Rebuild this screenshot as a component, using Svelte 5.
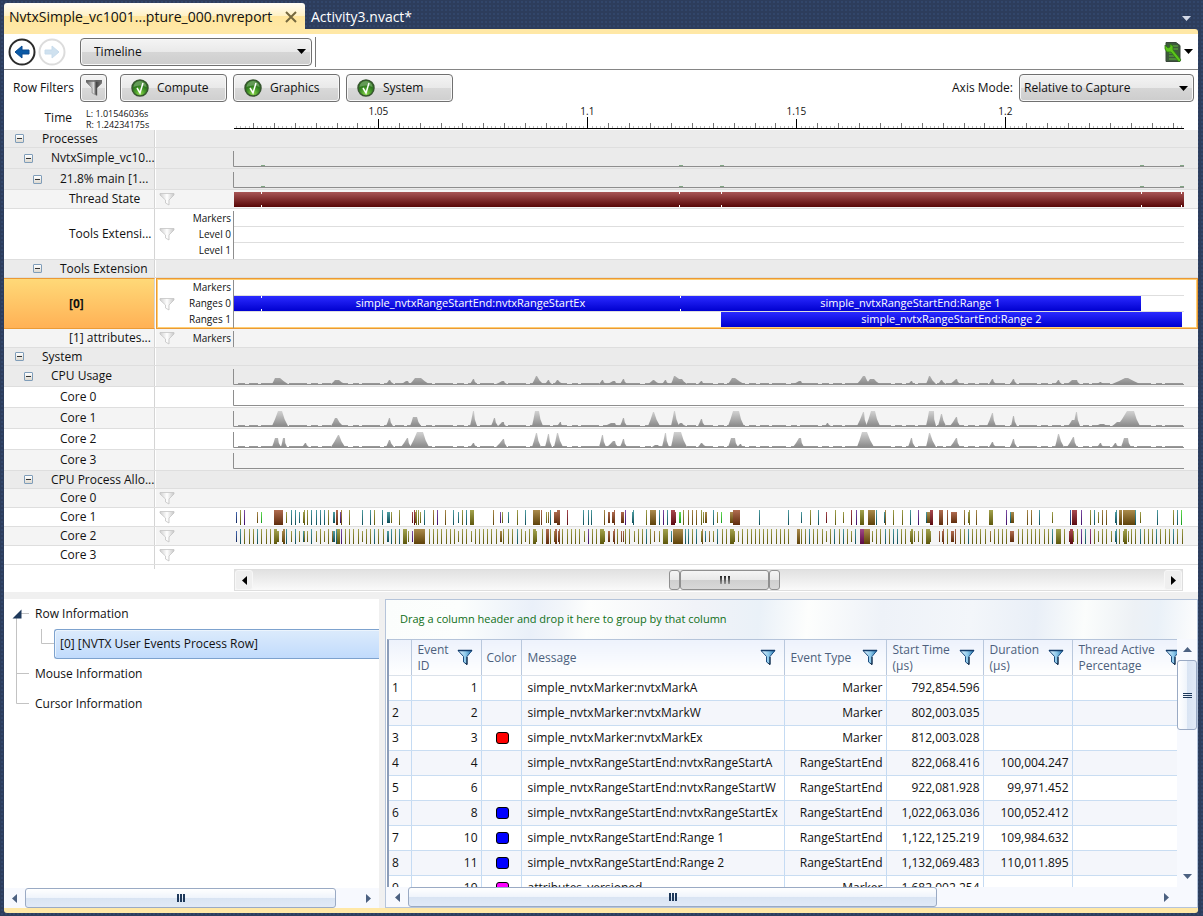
<script>
    let view = $state("Timeline");
    let axisMode = $state("Relative to Capture");
    let filters = $state([
        { name: "Compute", on: true },
        { name: "Graphics", on: true },
        { name: "System", on: true },
    ]);

    // All plots share this width, svgs stretch to the lane
    const W = 951;
    const START = 1.01546;
    const PX_PER_MS = 4.18;

    const ticks = Array.from({ length: 227 }, (_, i) => {
        const ms = 1016 + i;
        return {
            x: Math.round((ms - START * 1000) * PX_PER_MS) + 1,
            h: ms % 100 === 0 ? 12 : ms % 50 === 0 ? 10 : ms % 5 === 0 ? 6 : 3,
            color: ms % 50 === 0 ? "#000" : ms % 5 === 0 ? "#777" : "#bbb",
        };
    });
    const axisLabels = [1.05, 1.1, 1.15, 1.2].map((t) => ({
        t,
        left: (((t - START) * 1000 * PX_PER_MS + 1) / W) * 100,
    }));

    // left, top-left, top-right, right, height
    const usage = [
        [39,42,46,54,6],[98,102,105,111,4],[153,156,156,160,4],[168,173,174,177,3],[177,182,187,195,6],
        [237,240,240,243,5],[263,269,270,273,3],[299,303,303,309,8],[312,315,315,318,4],[321,324,324,329,4],
        [366,369,369,372,4],[374,380,381,384,3],[387,390,390,393,5],[415,420,420,426,4],[429,432,432,435,4],
        [438,441,441,453,8],[444,446,448,453,5],[465,468,468,471,3],[495,499,501,510,6],[560,566,567,570,3],
        [624,630,631,636,8],[633,637,640,646,5],[675,678,678,681,3],[693,696,696,702,8],[705,708,708,712,4],
        [717,723,723,726,5],[756,759,759,762,5],[777,780,780,783,5],[822,825,825,828,4],[834,839,843,846,4],
        [864,867,867,870,2],[879,892,894,906,6],
    ];
    const core1 = [
        [39,45,48,54,15],[98,102,103,109,8],[153,156,156,159,8],[177,180,183,187,9],[237,240,240,243,15],
        [258,261,261,264,8],[265,269,270,272,4],[299,302,305,309,15],[324,327,327,329,4],[371,378,381,384,3],
        [387,390,390,393,8],[415,420,420,426,14],[438,441,441,445,15],[444,447,448,452,3],[465,468,468,471,7],
        [495,500,505,510,15],[592,594,594,597,3],[624,630,630,633,14],[633,638,641,646,15],[693,696,700,702,15],
        [705,708,708,712,12],[717,723,723,726,9],[754,759,759,762,13],[778,780,780,783,10],[835,839,841,845,6],
        [840,843,843,846,14],[863,867,870,874,2],[879,884,890,895,4],[884,894,900,906,15],
    ];
    const core2 = [
        [39,42,44,47,9],[48,50,51,53,9],[69,72,72,75,4],[98,105,105,111,12],[153,156,156,160,7],
        [168,174,174,177,9],[177,184,189,195,15],[237,240,240,243,4],[263,270,270,273,8],[299,303,303,307,14],
        [312,315,315,318,13],[321,324,324,329,14],[366,369,369,372,12],[374,380,381,384,6],[387,390,390,393,8],
        [419,422,424,427,2],[429,432,432,435,14],[438,441,447,453,15],[465,468,468,473,4],[495,498,501,504,9],
        [504,507,507,510,3],[560,566,567,570,9],[624,629,633,640,15],[675,678,678,681,9],[693,696,696,702,14],
        [717,723,723,726,9],[756,759,759,762,5],[777,780,780,783,8],[822,825,825,830,13],[834,840,840,843,10],
        [864,867,867,870,4],[879,882,882,885,4],[888,891,894,897,9],
    ];

    // x[+width]colour, upper case is a short bar
    const alloc1 = `3N 7o 11p 24D 28G 41+9w 53O 58b 62b 66B 70O 71o 74o 78b 83b 87b 91b 95o 100+2B 103+2w 107P 108d 116o 129b 137b 141o 149b
        154+3B 158O 166o 179R 181r 182D 183o 185o 187O 191b 200d 204p 212d 220b 225B 229o 233b 237+4o 260d 267P 269O 275B 284o 292b
        300+7d 308w 313O 315D 317b 321+3W 324+3w 334r 350b 355b 358b 371d 375+2W 379+2W 381w 388+3W 392p 399B 400b 413o 417+6d 426b
        430p 434b 438+4r 442R 446+2G 450o 455d 459d 463d 468o 470O 472+2D 480b 484O 488G 497+3D 500+6w 506w 526b 555b 568B
        577o 585b 593R 602o 610O 618r 623p 627+4o 635+7d 643b 651B 652d 660o 669o 677b 685p 693B 694+3D 697+3r 706+4w 714w 718+6W
        731d 735O 736o 743d 756+4o 773p 777B 778+3D 794d 798d 806b 819O 837n 839+5r 848p 857o 861b 865O 869d 873d 882B 883b
        886+3d 890+12d 902b 907O 924b 940o 944b 948g`;
    const alloc2 = `3N 7b 11o 16o 20o 24b 28o 33o 37o 41+3o 44+2O 49D 50+2d 53b 58O 62b 66O 70B 71O 74O 78b 83O 87o 91O 95o 99D 100+2B 103b
        104+3o 108p 112o 116o 120o 125o 129O 133o 137o 141b 145o 150o 154+2B 158b 162o 166b 170+4o 175O 179P 181+11d 196o 200o 204o
        208o 213o 217o 221o 225O 229o 233o 238O 242o 246o 250o 254o 258o 263o 267+2D 270o 275o 279o 284b 288o 292O 296o 300+3o 303O
        309o 313+3w 317o 321D 322+2w 325W 326w 329o 334o 338o 342o 346o 351O 355p 359o 363o 367+4o 371O 375+2W 380W 381w 384o 388W 390W
        392o 396o 401O 405o 409o 413b 417o 421D 426O 430+4o 434o 438B 440+10d 452b 455b 459o 463b 468O 469d 472B 476D 480O 484b 489o
        493o 497+4o 501O 505O 509o 514o 518o 522o 526o 530o 534o 538o 543o 547o 551o 555o 564+3d 568o 572o 576b 580o 584o 589o 593O
        597o 601b 606o 610b 614o 618O 622b 627+4m 631+6d 639O 643o 647o 652b 656o 660b 664b 668o 672o 677O 678+2o 681O 685O 689o
        693+4o 697O 706W 709W 710w 714o 718+3W 722w 727o 731o 735b 739o 743o 747o 752o 757D 761o 765o 769o 773o 777+4W 785o 789o
        794o 798o 802o 806o 811o 815o 819b 823+5o 831o 836R 837+3r 840O 844o 848p 852b 857m 861o 865O 869o 873o 878O 882B 883b 886o
        890O 891+3o 895O 898o 902o 907b 911o 915o 919o 923b 927o 932o 936o 940b 944o 949o`;
    const barColors = {
        o: ["#a3a34e", "#5d570c"],
        d: ["#ab8b4c", "#5e4209"],
        w: ["#b06c50", "#5f2c0c"],
        r: ["#a94a50", "#5b0a10"],
        b: ["#4f9fa4", "#0e4d58"],
        p: ["#8050a8", "#3b0a66"],
        n: ["#4468b0", "#13285f"],
        g: ["#66dd55", "#159a1a"],
        m: ["#a04886", "#5c0b45"],
    };
    function parseBars(text) {
        return text.split(/\s+/).map((token) => {
            const [, x, w, c] = token.match(/^(\d+)(?:\+(\d+))?(\w)$/);
            return { x: +x, w: +(w ?? 1), c: c.toLowerCase(), short: c < "a" };
        });
    }

    const ranges0 = [
        { from: 1, to: 28, text: "" },
        { from: 28, to: 447, text: "simple_nvtxRangeStartEnd:nvtxRangeStartEx" },
        { from: 447, to: 908, text: "simple_nvtxRangeStartEnd:Range 1" },
    ];
    const ranges1 = [{ from: 488, to: 949, text: "simple_nvtxRangeStartEnd:Range 2" }];

    const rows = [
        { name: "Processes", depth: 0, open: true, size: "small", tone: "dark" },
        { name: "NvtxSimple_vc10...", depth: 1, open: true, size: "large", tone: "dark", peaks: [], blips: true },
        { name: "21.8% main [1...", depth: 2, open: true, size: "large", tone: "dark", peaks: [], blips: true },
        { name: "Thread State", depth: 3, size: "medium", tone: "light", filter: true, thread: true },
        { name: "Tools Extensi...", depth: 3, size: "triple", filter: true, lanes: [["Markers", []], ["Level 0", []], ["Level 1", []]] },
        { name: "Tools Extension", depth: 2, open: true, size: "small", tone: "dark" },
        { name: "[0]", depth: 3, size: "triple", filter: true, selected: true, lanes: [["Markers", []], ["Ranges 0", ranges0], ["Ranges 1", ranges1]] },
        { name: "[1] attributes...", depth: 3, size: "medium", tone: "light", filter: true, lanes: [["Markers", []]] },
        { name: "System", depth: 0, open: true, size: "small", tone: "dark" },
        { name: "CPU Usage", depth: 1, open: true, size: "large", tone: "dark", peaks: usage },
        { name: "Core 0", depth: 2, size: "large", peaks: [] },
        { name: "Core 1", depth: 2, size: "large", tone: "light", peaks: core1 },
        { name: "Core 2", depth: 2, size: "large", peaks: core2 },
        { name: "Core 3", depth: 2, size: "large", tone: "light", peaks: [] },
        { name: "CPU Process Allo...", depth: 1, open: true, size: "small", tone: "dark" },
        { name: "Core 0", depth: 2, size: "medium", tone: "light", filter: true },
        { name: "Core 1", depth: 2, size: "medium", filter: true, bars: parseBars(alloc1) },
        { name: "Core 2", depth: 2, size: "medium", tone: "light", filter: true, bars: parseBars(alloc2) },
        { name: "Core 3", depth: 2, size: "medium", filter: true },
    ];

    const columns = [
        { name: "Event ID", cls: "id", filter: true },
        { name: "Color", cls: "color" },
        { name: "Message", cls: "message", filter: true },
        { name: "Event Type", cls: "type", filter: true },
        { name: "Start Time (µs)", cls: "start", filter: true },
        { name: "Duration (µs)", cls: "duration", filter: true },
        { name: "Thread Active Percentage", cls: "thread", filter: true },
    ];
    const events = [
        [1, "", "simple_nvtxMarker:nvtxMarkA", "Marker", "792,854.596", ""],
        [2, "", "simple_nvtxMarker:nvtxMarkW", "Marker", "802,003.035", ""],
        [3, "#ff0000", "simple_nvtxMarker:nvtxMarkEx", "Marker", "812,003.028", ""],
        [4, "", "simple_nvtxRangeStartEnd:nvtxRangeStartA", "RangeStartEnd", "822,068.416", "100,004.247"],
        [6, "", "simple_nvtxRangeStartEnd:nvtxRangeStartW", "RangeStartEnd", "922,081.928", "99,971.452"],
        [8, "#0000ff", "simple_nvtxRangeStartEnd:nvtxRangeStartEx", "RangeStartEnd", "1,022,063.036", "100,052.412"],
        [10, "#0000ff", "simple_nvtxRangeStartEnd:Range 1", "RangeStartEnd", "1,122,125.219", "109,984.632"],
        [11, "#0000ff", "simple_nvtxRangeStartEnd:Range 2", "RangeStartEnd", "1,132,069.483", "110,011.895"],
        [19, "#ff00ff", "attributes_versioned", "Marker", "1,682,002.254", ""],
    ];
</script>

{#snippet funnel(kind)}
    <svg class="funnel" width="16" height="16" viewBox="0 0 16 16" aria-hidden="true">
        {#if kind === "blue"}
            <path d="M1 1.500h14L10 7.500V15.500L6.500 13V7.500z" fill="url(#funnelBlue)" stroke="#1d4f82" />
            <path d="M1 1.500h14" stroke="#123a68" stroke-width="1.500" />
            <path d="M10 8v7.500l-1.500-1" stroke="#14283e" fill="none" />
        {:else if kind === "dark"}
            <path d="M0 0h17v2L11 8v7.500L6 13V8L0 2z" fill="url(#funnelDark)" stroke="#777" stroke-width=".5" />
            <path d="M0 1h16" stroke="#6a6a6a" stroke-width="1.500" />
        {:else}
            <path d="M1 2.500h14v1.500L10 9v5L6.500 12V9L1 4z" fill="url(#funnelLight)" stroke="#c4c4c4" stroke-width=".8" />
        {/if}
    </svg>
{/snippet}

{#snippet caret(dir)}
    <svg class="caret" width="9" height="9" viewBox="0 0 9 9" fill="currentColor" aria-hidden="true">
        {#if dir === "down"}<path d="M0 2h9L4.500 7z" />
        {:else if dir === "up"}<path d="M0 7h9L4.500 2z" />
        {:else if dir === "left"}<path d="M7 0v9L2 4.500z" />
        {:else}<path d="M2 0v9l5-4.500z" />{/if}
    </svg>
{/snippet}

<!-- shared gradients -->
<svg class="defs" width="0" height="0" aria-hidden="true">
    <defs>
        <linearGradient id="funnelBlue"><stop stop-color="#e8f6ff" /><stop offset=".55" stop-color="#8cc8ea" /><stop offset="1" stop-color="#2474ae" /></linearGradient>
        <linearGradient id="funnelDark"><stop stop-color="#555" /><stop offset=".45" stop-color="#dcdcdc" /><stop offset=".6" stop-color="#444" /><stop offset="1" stop-color="#888" /></linearGradient>
        <linearGradient id="funnelLight"><stop stop-color="#cfcfcf" /><stop offset=".5" stop-color="#fff" /><stop offset="1" stop-color="#c6c6c6" /></linearGradient>
        <linearGradient id="peak" x1="0" x2="0" y1="0" y2="16" gradientUnits="userSpaceOnUse"><stop stop-color="#d2d2d2" /><stop offset="1" stop-color="#868686" /></linearGradient>
        <radialGradient id="check" cx=".5" cy=".85"><stop stop-color="#8fd84e" /><stop offset=".6" stop-color="#4a9e2b" /><stop offset="1" stop-color="#2f7a1e" /></radialGradient>
        {#each Object.entries(barColors) as [key, [top, bottom]]}
            <linearGradient id="bar-{key}" x1="0" x2="0" y1="0" y2="1"><stop stop-color={top} /><stop offset="1" stop-color={bottom} /></linearGradient>
        {/each}
    </defs>
</svg>

<div class="window">
    <nav class="tabs">
        <div class="tab active">
            <a href="#report">NvtxSimple_vc1001...pture_000.nvreport</a>
            <button class="close" aria-label="Close tab">
                <svg width="12" height="12" viewBox="0 0 12 12"><path d="M1 1l10 10M11 1L1 11" stroke="#75683f" stroke-width="2" /></svg>
            </button>
        </div>
        <div class="tab"><a href="#activity">Activity3.nvact*</a></div>
        <button class="tab-list" aria-label="Open documents">{@render caret("down")}</button>
    </nav>

    <main>
        <div class="toolbar">
            <button class="nav-button" aria-label="Back">
                <svg width="28" height="28" viewBox="0 0 28 28"><circle cx="14" cy="14" r="12.500" fill="#fff" stroke="#2b2b2b" stroke-width="2" /><path d="M7 14l7-6v4h7v4h-7v4z" fill="#0a59a5" stroke="#0a4a90" stroke-linejoin="round" /></svg>
            </button>
            <button class="nav-button" aria-label="Forward" disabled>
                <svg width="28" height="28" viewBox="0 0 28 28"><circle cx="14" cy="14" r="12.500" fill="#fff" stroke="#dcdcdc" stroke-width="2" /><path d="M21 14l-7-6v4H7v4h7v4z" fill="#cfe1ef" stroke="#c8dcec" stroke-linejoin="round" /></svg>
            </button>
            <div class="select view-select">
                <select bind:value={view} aria-label="View"><option>Timeline</option><option>Summary</option></select>
                {@render caret("down")}
            </div>
            <span class="divider"></span>
            <button class="tools" aria-label="Report options">
                <svg width="18" height="22" viewBox="0 0 18 22">
                    <path d="M2 1.500h10l4 3V20.500H2z" fill="#3d5a3b" stroke="#39473a" />
                    <path d="M9 5h5M9 8h5M5 12h3M5 15h6M5 18h8" stroke="#63b63c" />
                    <path d="M1 4l3 3 2-1 0-3 3 2 0 4 8 10-2 2-8-10-4 0-2-3z" fill="#5cc41a" stroke="#2d7a14" stroke-width=".8" />
                </svg>
                {@render caret("down")}
            </button>
        </div>

        <div class="filters">
            <span>Row Filters</span>
            <button class="push funnel-button" aria-label="Edit row filters">{@render funnel("dark")}</button>
            {#each filters as f}
                <button class="push toggle" aria-pressed={f.on} onclick={() => (f.on = !f.on)}>
                    <svg width="18" height="18" viewBox="0 0 18 18">
                        <circle cx="9" cy="9" r="8" fill={f.on ? "url(#check)" : "#ccc"} stroke="#37552f" stroke-width="1.500" />
                        <path d="M2.500 8a6.500 6 0 0 1 13 0q-6.500-3-13 0z" fill="#fff" opacity=".25" />
                        <path d="M6 9l3 5 3-10" fill="none" stroke="#fff" stroke-width="1.500" />
                    </svg>
                    <span>{f.name}</span>
                </button>
            {/each}
            <label for="axis">Axis Mode:</label>
            <div class="select axis-select">
                <select id="axis" bind:value={axisMode}><option>Relative to Capture</option><option>Absolute</option></select>
                {@render caret("down")}
            </div>
        </div>

        <section class="timeline">
            <div class="time-row">
                <span class="time">Time</span>
                <span class="bounds">L: 1.01546036s<br />R: 1.24234175s</span>
                <div class="axis">
                    {#each axisLabels as a}
                        <span class="axis-label" style="left: {a.left}%">{a.t}</span>
                    {/each}
                    <svg width="100%" height="13" viewBox="0 0 {W} 13" preserveAspectRatio="none">
                        {#each ticks as t}
                            <rect x={t.x} y={12 - t.h} width="1" height={t.h} fill={t.color} />
                        {/each}
                        <rect x="1" y="11" width="950" height="1" fill="#000" />
                    </svg>
                </div>
            </div>

            {#each rows as row}
                <div class="row {row.size} {row.tone ?? ''}" class:selected={row.selected}>
                    <div class="name">
                        <span class="indent" style="width: {11 + row.depth * 9}px"></span>
                        {#if row.open}
                            <button class="expander" aria-label="Collapse {row.name}"></button>
                        {:else}
                            <span class="leaf"></span>
                        {/if}
                        <span class="text">{row.name}</span>
                    </div>
                    <div class="body">
                        <div class="info">
                            {#if row.filter}{@render funnel("light")}{/if}
                            {#if row.lanes}
                                <div class="lane-names">
                                    {#each row.lanes as [label]}<span>{label}</span>{/each}
                                </div>
                            {/if}
                        </div>
                        <div class="plot">
                            {#if row.peaks}
                                <svg class="graph" width="100%" height="16" viewBox="0 0 {W} 16" preserveAspectRatio="none">
                                    {#if row.peaks.length}
                                        <path d="M5 14.500H{W}" stroke="#979797" stroke-dasharray="7 4 9 3 14 5 6 3 18 4" />
                                    {/if}
                                    {#each row.peaks as [l, a, b, r, h]}
                                        <polygon points="{l},15 {l + (a - l) * 0.5},{15 - h * 0.45} {a},{15 - h} {b + 1},{15 - h} {r - (r - b) * 0.4},{15 - h * 0.45} {r + 1},15" fill="url(#peak)" />
                                    {/each}
                                    {#if row.blips}
                                        {#each [28, 446, 487, 907, 947] as x}
                                            <rect {x} y="14" width="4" height="1" fill="#7fa482" />
                                        {/each}
                                    {/if}
                                    <path d="M.5 0V15.500H{W}" fill="none" stroke="#8e8e8e" />
                                </svg>
                            {:else if row.thread}
                                <svg class="strip" width="100%" height="15" viewBox="0 0 {W} 15" preserveAspectRatio="none">
                                    <rect x="1" width="950" height="15" fill="url(#thread)" />
                                    <linearGradient id="thread" x1="0" x2="0" y1="0" y2="1"><stop stop-color="#a85555" /><stop offset="1" stop-color="#570606" /></linearGradient>
                                    {#each [28, 446, 488, 908, 948] as x}
                                        <path d="M{x + 0.5} 0v2m0 11v2" stroke="#fff" />
                                    {/each}
                                </svg>
                            {:else if row.bars}
                                <svg class="strip" width="100%" height="15" viewBox="0 0 {W} 15" preserveAspectRatio="none">
                                    {#each row.bars as b}
                                        <rect x={b.x} y={b.short ? 2 : 0} width={b.w} height={b.short ? 11 : 15} fill="url(#bar-{b.c})" />
                                    {/each}
                                </svg>
                            {:else if row.lanes}
                                <div class="lanes">
                                    {#each row.lanes as [, items]}
                                        <div class="lane">
                                            {#each items as r}
                                                <div class="range" style="left: {((r.from - 1) / (W - 1)) * 100}%; width: {((r.to - r.from) / (W - 1)) * 100}%">{r.text}</div>
                                            {/each}
                                        </div>
                                    {/each}
                                </div>
                            {/if}
                        </div>
                    </div>
                </div>
            {/each}

            <div class="time-scroll-row">
                <div class="time-scroll">
                    <button aria-label="Scroll left">{@render caret("left")}</button>
                    <span class="before"></span>
                    <div class="zoom-thumb">
                        <span class="grip"></span>
                        <span class="thumb"><i></i><i></i><i></i></span>
                        <span class="grip"></span>
                    </div>
                    <span class="after"></span>
                    <button aria-label="Scroll right">{@render caret("right")}</button>
                </div>
            </div>
        </section>

        <div class="details">
            <aside>
                <ul class="tree">
                    <li>
                        <div class="node">
                            <svg class="guide" width="31" height="30"><path d="M12.500 18v12M15 14.500h10" /><path class="arrow" d="M8.500 19.500h9v-9z" /></svg>
                            Row Information
                        </div>
                        <ul>
                            <li class="child">
                                <svg class="guide" width="50" height="30"><path d="M12.500 0v30M37.500 0v14.500H50" /></svg>
                                <button class="node picked">[0] [NVTX User Events Process Row]</button>
                            </li>
                        </ul>
                    </li>
                    <li class="node"><svg class="guide" width="31" height="30"><path d="M12.500 0v30M12.500 14.500H25" /></svg>Mouse Information</li>
                    <li class="node"><svg class="guide" width="31" height="30"><path d="M12.500 0v14.500H25" /></svg>Cursor Information</li>
                </ul>
                <div class="hscroll tree-scroll">
                    <button aria-label="Scroll left">{@render caret("left")}</button>
                    <div class="bar"><i></i><i></i><i></i></div>
                    <button aria-label="Scroll right">{@render caret("right")}</button>
                </div>
            </aside>

            <section class="events">
                <div class="group-panel">Drag a column header and drop it here to group by that column</div>
                <div class="grid">
                    <div class="table-box">
                        <table>
                            <thead>
                                <tr>
                                    <th class="num" aria-label="Row"></th>
                                    {#each columns as c}
                                        <th class={c.cls}>
                                            <div><span>{c.name}</span>{#if c.filter}<button aria-label="Filter {c.name}">{@render funnel("blue")}</button>{/if}</div>
                                        </th>
                                    {/each}
                                </tr>
                            </thead>
                            <tbody>
                                {#each events as [id, color, message, type, start, duration], i}
                                    <tr>
                                        <td class="num">{i + 1}</td>
                                        <td>{id}</td>
                                        <td class="color">{#if color}<span class="swatch" style="background: {color}"></span>{/if}</td>
                                        <td class="message">{message}</td>
                                        <td>{type}</td>
                                        <td>{start}</td>
                                        <td>{duration}</td>
                                        <td></td>
                                    </tr>
                                {/each}
                            </tbody>
                        </table>
                    </div>
                    <div class="vscroll">
                        <button aria-label="Scroll up">{@render caret("up")}</button>
                        <div class="bar"><i></i><i></i><i></i></div>
                        <button aria-label="Scroll down">{@render caret("down")}</button>
                    </div>
                </div>
                <div class="hscroll grid-scroll">
                    <button aria-label="Scroll left">{@render caret("left")}</button>
                    <div class="bar"><i></i><i></i><i></i></div>
                    <button aria-label="Scroll right">{@render caret("right")}</button>
                </div>
            </section>
        </div>
    </main>
</div>

<style>
    :global(body) {
        background: #2d3f60;
    }
    * {
        box-sizing: border-box;
    }
    .defs {
        position: absolute;
    }
    .window {
        display: flex;
        flex-direction: column;
        height: 100vh;
        padding: 3px 5px 3px 4px;
        background: radial-gradient(circle, #32466a 1px, transparent 1px) 0 0 / 4px 4px, #2d3d5c;
        font-family: "Open Sans", "Noto Sans", sans-serif;
        font-size: 12px;
        line-height: 16px;
        color: #111;
    }
    button,
    select {
        font: inherit;
        color: inherit;
        margin: 0;
        padding: 0;
        border: 0;
        background: none;
    }
    svg {
        display: block;
        flex: none;
    }
    ul {
        list-style: none;
        margin: 0;
        padding: 0;
    }

    /* tabs */
    .tabs {
        display: flex;
        height: 26px;
        flex: none;
        font-size: 14px;
    }
    .tab {
        display: flex;
        align-items: center;
        gap: 14px;
        padding: 2px 6px 0;
    }
    .tab a {
        color: #fff;
        text-decoration: none;
        white-space: nowrap;
    }
    .tab.active {
        width: 301px;
        justify-content: space-between;
        padding: 2px 8px 0 5px;
        gap: 0;
        background: linear-gradient(#fffdf5, #fff1c5 50%, #ffe59c 50%, #ffe8a6);
        border-radius: 3px 3px 0 0;
    }
    .tab.active a {
        color: #111;
    }
    .tab-list {
        margin-left: auto;
        padding: 5px 7px 0;
        color: #d3d9e6;
    }

    main {
        flex: 1;
        min-height: 0;
        display: flex;
        flex-direction: column;
        border: solid #ffe8a6;
        border-width: 5px 0;
        border-radius: 0 3px 3px 3px;
        background: #fff;
    }

    /* toolbar */
    .toolbar {
        display: flex;
        align-items: center;
        height: 36px;
        flex: none;
        padding: 0 5px 0 4px;
        border-bottom: 1px solid #858585;
    }
    .nav-button {
        margin-right: 2px;
    }
    .select {
        display: grid;
        align-items: center;
    }
    .select select {
        grid-area: 1 / 1;
        width: 100%;
        height: 28px;
        appearance: none;
        border: 1px solid #707070;
        border-radius: 4px;
        background: linear-gradient(#f4f4f4, #e9e9e9 50%, #d6d6d6 50%, #cdcdcd);
        box-shadow: inset 0 0 0 1px #f8f8f8;
        color: #111;
    }
    .select .caret {
        grid-area: 1 / 1;
        justify-self: end;
        margin-right: 6px;
        pointer-events: none;
        color: #000;
    }
    .view-select {
        width: 232px;
        margin-left: 12px;
    }
    .view-select select {
        padding-left: 13px;
    }
    .axis-select {
        width: 175px;
    }
    .axis-select select {
        padding-left: 4px;
    }
    .divider {
        width: 1px;
        height: 30px;
        margin-left: 3px;
        background: #777;
    }
    .tools {
        display: flex;
        align-items: center;
        gap: 2px;
        margin-left: auto;
        color: #000;
    }

    /* row filters */
    .filters {
        display: flex;
        align-items: center;
        height: 36px;
        flex: none;
        padding: 0 4px 0 9px;
        gap: 6px;
    }
    .push {
        height: 28px;
        border: 1px solid #707070;
        border-radius: 4px;
        background: linear-gradient(#f4f4f4, #e9e9e9 50%, #d9d9d9 50%, #cfcfcf);
        box-shadow: inset 0 0 0 1px #f8f8f8;
    }
    .funnel-button {
        width: 27px;
        padding-left: 5px;
        margin-right: 7px;
    }
    .toggle {
        display: flex;
        align-items: center;
        width: 107px;
        padding: 0 10px;
        gap: 8px;
    }
    .filters label {
        margin-left: auto;
    }

    /* timeline */
    .timeline {
        flex: none;
    }
    .time-row {
        display: flex;
        height: 24px;
        padding-right: 14px;
    }
    .time {
        width: 68px;
        text-align: right;
        padding-top: 4px;
    }
    .bounds {
        width: 161px;
        padding: 2px 0 0 14px;
        font-size: 9px;
        line-height: 11px;
    }
    .axis {
        position: relative;
        flex: 1;
        display: flex;
        align-items: flex-end;
    }
    .axis-label {
        position: absolute;
        top: -1px;
        transform: translateX(-50%);
        font-size: 10px;
        line-height: 12px;
    }
    .row {
        display: flex;
        border-bottom: 1px solid #dedede;
    }
    .small {
        height: 18px;
    }
    .medium {
        height: 19px;
    }
    .large {
        height: 21px;
    }
    .triple {
        height: 51px;
    }
    .name {
        display: flex;
        align-items: center;
        width: 151px;
        flex: none;
        margin-right: 1px;
        border-right: 1px solid #d4d4d4;
        white-space: nowrap;
    }
    .body {
        display: flex;
        flex: 1;
        padding-right: 14px;
    }
    .dark .name,
    .dark .body {
        background: #ebebeb;
    }
    .light .name,
    .light .body {
        background: #f4f4f4;
    }
    .indent {
        flex: none;
    }
    .expander,
    .leaf {
        width: 9px;
        height: 9px;
        margin-right: 18px;
        flex: none;
    }
    .expander {
        border: 1px solid #7f9db9;
        border-radius: 1px;
        background: linear-gradient(#333, #333) center / 5px 1px no-repeat, linear-gradient(#fff, #ddd9d0);
    }
    .info {
        display: flex;
        align-items: center;
        width: 77px;
        flex: none;
        padding: 0 2px 0 3px;
    }
    .lane-names {
        display: flex;
        flex-direction: column;
        flex: 1;
        align-self: flex-start;
        margin-top: 1px;
        text-align: right;
        font-size: 10px;
        white-space: nowrap;
    }
    .plot {
        flex: 1;
        min-width: 0;
    }
    .graph {
        margin-top: 3px;
    }
    .strip {
        margin-top: 2px;
    }
    .lanes {
        margin-top: 2px;
        border-left: 1px solid #8e8e8e;
    }
    .lane {
        position: relative;
        height: 16px;
        border-bottom: 1px solid #dedede;
    }
    .lane:last-child {
        border-bottom: 0;
    }
    .range {
        position: absolute;
        top: 0;
        height: 15px;
        background: linear-gradient(#2a2aff, #0000d0);
        color: #fff;
        font-size: 11px;
        line-height: 14px;
        text-align: center;
        white-space: nowrap;
        overflow: hidden;
    }
    /* notch where one range meets the next */
    .range + .range {
        background: linear-gradient(#fff 2px, transparent 2px 13px, #fff 13px) 0 0 / 1px 15px no-repeat, linear-gradient(#2a2aff, #0000d0);
    }
    .selected {
        border-bottom: 0;
    }
    .selected .name {
        background: linear-gradient(#ffd978, #ffb155);
        border-top: 1px solid #eb9a35;
        border-bottom: 1px solid #eb9a35;
        font-weight: bold;
    }
    .selected .body {
        box-shadow: inset 0 0 0 1px #eb9a35, inset 0 0 0 2px #ffcf73;
    }
    .time-scroll-row {
        padding: 4px 15px 8px 230px;
        background: linear-gradient(#d4d4d4, #d4d4d4) 150px 0 / 1px 4px no-repeat, linear-gradient(#fff, #fff) 0 0 / 100% 27px no-repeat, #f0f0f0;
    }
    .time-scroll {
        display: flex;
        height: 22px;
        border: 1px solid #dedede;
        background: linear-gradient(#e1e1e1, #fafafa);
    }
    .time-scroll button {
        display: grid;
        place-items: center;
        width: 18px;
        border: 1px solid #f7f7f7;
        border-radius: 3px;
        background: #efefef;
        color: #000;
    }
    .before {
        flex: 416;
    }
    .after {
        flex: 384;
    }
    .zoom-thumb {
        display: flex;
        width: 111px;
    }
    .grip,
    .thumb {
        border: 1px solid #8f8f8f;
        border-radius: 3px;
        background: linear-gradient(#f5f5f5, #e8e8e8 50%, #cfcfcf 50%, #d8d8d8);
    }
    .grip {
        width: 11px;
    }
    .thumb {
        display: flex;
        flex: 1;
        align-items: center;
        justify-content: center;
        gap: 2px;
    }
    .thumb i {
        width: 2px;
        height: 8px;
        background: linear-gradient(#222, #999);
    }

    /* lower half */
    .details {
        display: flex;
        flex: 1;
        min-height: 0;
        gap: 6px;
        background: #f0f0f0;
    }
    aside {
        display: flex;
        flex-direction: column;
        width: 375px;
        flex: none;
        background: #fff;
    }
    .tree {
        flex: 1;
    }
    .node {
        display: flex;
        align-items: center;
        height: 30px;
    }
    .guide {
        fill: none;
        stroke: #c3c3c3;
    }
    .guide .arrow {
        fill: #1e395b;
        stroke: none;
    }
    .child {
        display: flex;
    }
    .picked {
        flex: 1;
        padding-left: 5px;
        border: 1px solid #7da2ce;
        border-right: 0;
        border-radius: 3px 0 0 3px;
        background: linear-gradient(#dcebfc, #c1dbfc);
        box-shadow: inset 1px 1px 0 #ebf4fd;
    }
    .hscroll {
        display: flex;
        height: 20px;
        flex: none;
        background: #f7f9fe;
        color: #4c6181;
    }
    .hscroll button,
    .vscroll button {
        display: grid;
        place-items: center;
        width: 21px;
        flex: none;
    }
    .hscroll button:last-child {
        margin-left: auto;
    }
    .bar {
        display: flex;
        align-items: center;
        justify-content: center;
        gap: 1px;
        border: 1px solid #9aaac4;
        border-radius: 3px;
        background: linear-gradient(#fff, #eff4fb 50%, #d9e4f3 50%, #e1eaf7);
    }
    .bar i {
        width: 2px;
        height: 8px;
        background: #1e395b;
    }
    .tree-scroll .bar {
        width: 83%;
    }
    .grid-scroll {
        padding: 0 20px 0 1px;
    }
    .grid-scroll .bar {
        width: 67%;
    }
    .events {
        display: flex;
        flex-direction: column;
        flex: 1;
        min-width: 0;
        border: 1px solid #b5c4da;
        background: #fff;
    }
    .group-panel {
        height: 39px;
        flex: none;
        padding: 11px 14px;
        font-size: 11px;
        color: #0f6f17;
        background: linear-gradient(95deg, #fbfdfc 0%, #fcfefd 9%, #eaf0f9 18%, #f3f6fa 22%, #fdfefd 25%, #f1f3f8 38%, #eaf1f8 46%, #fdfefd 52%, #eef2f8 61%, #f3f6fa 72%, #e9eff7 80%, #fbfdfc 86%, #edf1f5 92%, #eaf1f8 95%, #fdfdfd);
    }
    .grid {
        display: flex;
        flex: 1;
        min-height: 0;
    }
    .table-box {
        flex: 1;
        min-width: 0;
        overflow: hidden;
        border-top: 1px solid #b5c4da;
        border-left: 2px solid #8c9db8;
        margin-left: 1px;
    }
    table {
        width: 100%;
        table-layout: fixed;
        border-collapse: collapse;
    }
    th {
        height: 35px;
        padding: 0 0 0 6px;
        border-right: 1px solid #b9c8dd;
        border-bottom: 1px solid #dbe2ea;
        background: linear-gradient(#edf2fc, #fff);
        color: #4c5f7c;
        font-weight: normal;
        text-align: left;
    }
    th div {
        display: flex;
        align-items: center;
        justify-content: space-between;
        height: 34px;
    }
    th span {
        padding-top: 2px;
    }
    th button {
        margin-right: 8px;
    }
    th.num {
        width: 22px;
    }
    th.id {
        width: 70px;
    }
    th.color {
        width: 40px;
        padding-left: 5px;
    }
    th.message {
        width: 263px;
    }
    th.type {
        width: 102px;
    }
    th.start {
        width: 97px;
    }
    th.duration {
        width: 89px;
    }
    th.thread button {
        margin-right: -4px;
    }
    td {
        height: 25px;
        padding: 0 3px;
        border-right: 1px solid #c5dbf3;
        border-bottom: 1px solid #c9ddf2;
        text-align: right;
        white-space: nowrap;
    }
    td.num {
        text-align: left;
    }
    td.message {
        text-align: left;
        padding: 0 0 0 6px;
    }
    td.color {
        text-align: center;
        padding-left: 5px;
    }
    tr:nth-child(even) td {
        background: #f4f6fb;
    }
    th:last-child,
    td:last-child {
        border-right: 0;
    }
    .swatch {
        display: inline-block;
        width: 13px;
        height: 12px;
        border: 1px solid #000;
        border-radius: 3px;
        vertical-align: middle;
    }
    .vscroll {
        display: flex;
        flex-direction: column;
        width: 20px;
        flex: none;
        background: #f7f9fe;
        color: #4c6181;
    }
    .vscroll button {
        height: 21px;
        width: 20px;
    }
    .vscroll button:last-child {
        margin-top: auto;
    }
    .vscroll .bar {
        flex-direction: column;
        height: 70px;
        background: linear-gradient(90deg, #fff, #eff4fb 50%, #d9e4f3 50%, #e1eaf7);
    }
    .vscroll .bar i {
        width: 9px;
        height: 1px;
    }
</style>
